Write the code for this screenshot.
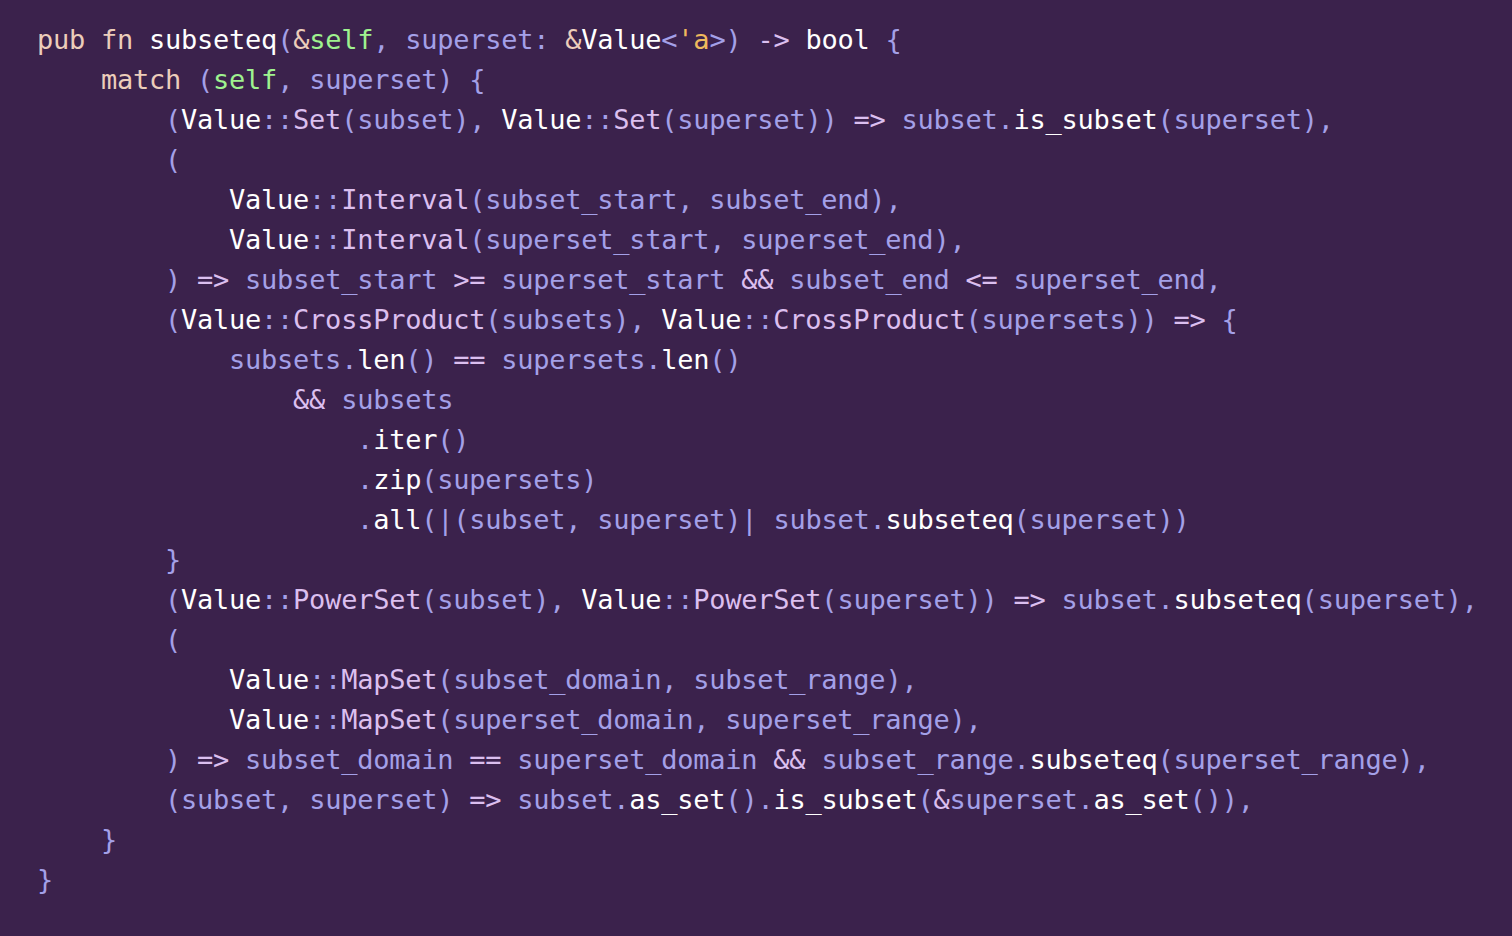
const code = `pub fn subseteq(&self, superset: &Value<'a>) -> bool {
    match (self, superset) {
        (Value::Set(subset), Value::Set(superset)) => subset.is_subset(superset),
        (
            Value::Interval(subset_start, subset_end),
            Value::Interval(superset_start, superset_end),
        ) => subset_start >= superset_start && subset_end <= superset_end,
        (Value::CrossProduct(subsets), Value::CrossProduct(supersets)) => {
            subsets.len() == supersets.len()
                && subsets
                    .iter()
                    .zip(supersets)
                    .all(|(subset, superset)| subset.subseteq(superset))
        }
        (Value::PowerSet(subset), Value::PowerSet(superset)) => subset.subseteq(superset),
        (
            Value::MapSet(subset_domain, subset_range),
            Value::MapSet(superset_domain, superset_range),
        ) => subset_domain == superset_domain && subset_range.subseteq(superset_range),
        (subset, superset) => subset.as_set().is_subset(&superset.as_set()),
    }
}`;

// helix default palette
const almond = "text-[#eccdba]";
const lavender = "text-[#a4a0e8]";
const lilac = "text-[#dbbfef]";
const white = "text-white";
const mint = "text-[#9ff28f]";
const honey = "text-[#efba5d]";

const keywords = ["pub", "fn", "match"];

function tokenize(line: string, first: boolean) {
  const re = /(\s+)|('[a-z]+)|([A-Za-z_][A-Za-z0-9_]*)|(::|=>|->|==|>=|<=|&&)|(.)/g;
  const out: { t: string; c: string }[] = [];
  let m: RegExpExecArray | null;
  while ((m = re.exec(line))) {
    const [t, ws, life, ident, op, ch] = m;
    if (ws) out.push({ t, c: "" });
    else if (life) out.push({ t, c: honey });
    else if (ident) {
      let c = lavender;
      if (keywords.includes(ident)) c = almond;
      else if (ident === "self") c = mint;
      else if (ident === "bool" || ident === "Value") c = white;
      else if (/^[A-Z]/.test(ident)) c = lilac;
      else if (line[re.lastIndex] === "(") c = white;
      out.push({ t, c });
    } else if (op) out.push({ t, c: op === "::" ? lavender : lilac });
    else if (ch === "&") out.push({ t, c: first ? almond : lilac });
    else out.push({ t, c: lavender });
  }
  return out;
}

const App = () => {
  const lines = code.split("\n");
  return (
    <div className="w-full min-h-screen bg-[#3b224c] pt-[20px] pl-[37px] font-['DejaVu_Sans_Mono',monospace] text-[27px] tracking-[-0.25px] leading-[40px]">
      {lines.map((line, i) => (
        <div key={i} className="whitespace-pre h-[40px]">
          {tokenize(line, i === 0).map((tok, j) => (
            <span key={j} className={tok.c}>
              {tok.t}
            </span>
          ))}
        </div>
      ))}
    </div>
  );
};

export default App;
